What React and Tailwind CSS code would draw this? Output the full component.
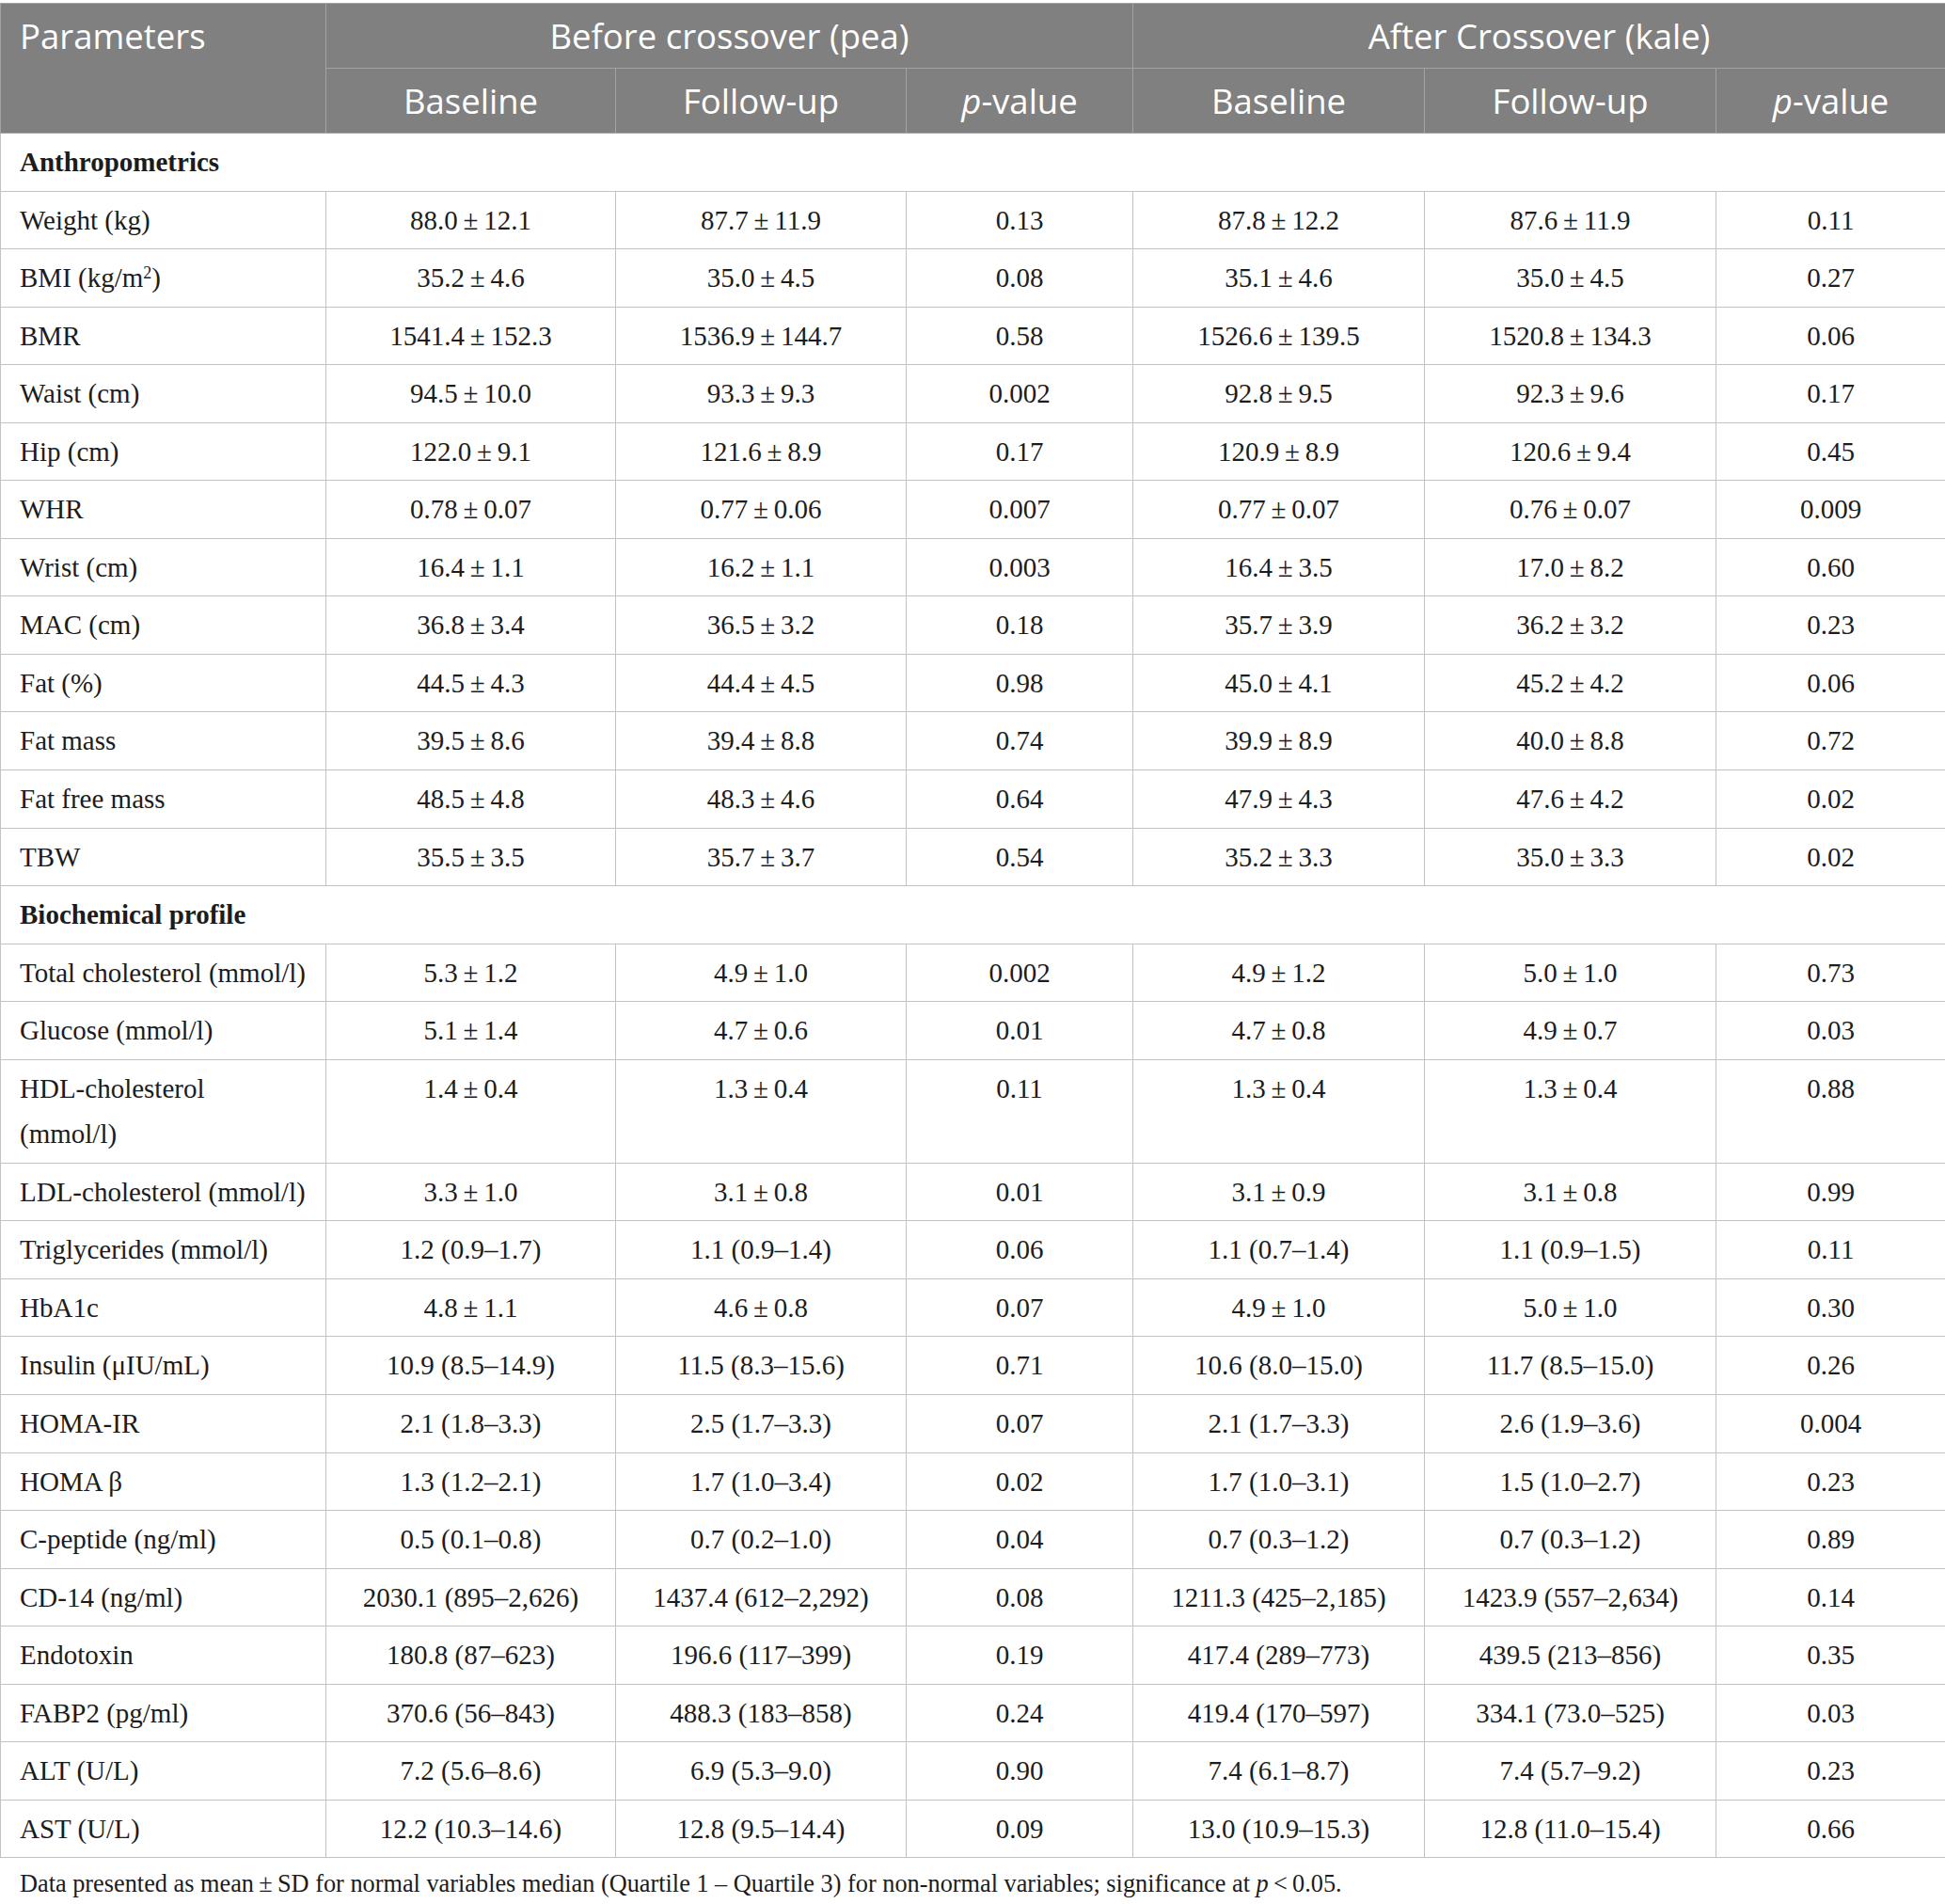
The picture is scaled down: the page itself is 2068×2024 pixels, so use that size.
// Crossover study results table: pea vs kale, anthropometrics and biochemical profile.

const anthropometrics = [
  ['Weight (kg)', '88.0 ± 12.1', '87.7 ± 11.9', '0.13', '87.8 ± 12.2', '87.6 ± 11.9', '0.11'],
  [<>BMI (kg/m<sup className="text-[18px]">2</sup>)</>, '35.2 ± 4.6', '35.0 ± 4.5', '0.08', '35.1 ± 4.6', '35.0 ± 4.5', '0.27'],
  ['BMR', '1541.4 ± 152.3', '1536.9 ± 144.7', '0.58', '1526.6 ± 139.5', '1520.8 ± 134.3', '0.06'],
  ['Waist (cm)', '94.5 ± 10.0', '93.3 ± 9.3', '0.002', '92.8 ± 9.5', '92.3 ± 9.6', '0.17'],
  ['Hip (cm)', '122.0 ± 9.1', '121.6 ± 8.9', '0.17', '120.9 ± 8.9', '120.6 ± 9.4', '0.45'],
  ['WHR', '0.78 ± 0.07', '0.77 ± 0.06', '0.007', '0.77 ± 0.07', '0.76 ± 0.07', '0.009'],
  ['Wrist (cm)', '16.4 ± 1.1', '16.2 ± 1.1', '0.003', '16.4 ± 3.5', '17.0 ± 8.2', '0.60'],
  ['MAC (cm)', '36.8 ± 3.4', '36.5 ± 3.2', '0.18', '35.7 ± 3.9', '36.2 ± 3.2', '0.23'],
  ['Fat (%)', '44.5 ± 4.3', '44.4 ± 4.5', '0.98', '45.0 ± 4.1', '45.2 ± 4.2', '0.06'],
  ['Fat mass', '39.5 ± 8.6', '39.4 ± 8.8', '0.74', '39.9 ± 8.9', '40.0 ± 8.8', '0.72'],
  ['Fat free mass', '48.5 ± 4.8', '48.3 ± 4.6', '0.64', '47.9 ± 4.3', '47.6 ± 4.2', '0.02'],
  ['TBW', '35.5 ± 3.5', '35.7 ± 3.7', '0.54', '35.2 ± 3.3', '35.0 ± 3.3', '0.02'],
];

const biochemical = [
  ['Total cholesterol (mmol/l)', '5.3 ± 1.2', '4.9 ± 1.0', '0.002', '4.9 ± 1.2', '5.0 ± 1.0', '0.73'],
  ['Glucose (mmol/l)', '5.1 ± 1.4', '4.7 ± 0.6', '0.01', '4.7 ± 0.8', '4.9 ± 0.7', '0.03'],
  [<>HDL-cholesterol<br />(mmol/l)</>, '1.4 ± 0.4', '1.3 ± 0.4', '0.11', '1.3 ± 0.4', '1.3 ± 0.4', '0.88'],
  ['LDL-cholesterol (mmol/l)', '3.3 ± 1.0', '3.1 ± 0.8', '0.01', '3.1 ± 0.9', '3.1 ± 0.8', '0.99'],
  ['Triglycerides (mmol/l)', '1.2 (0.9–1.7)', '1.1 (0.9–1.4)', '0.06', '1.1 (0.7–1.4)', '1.1 (0.9–1.5)', '0.11'],
  ['HbA1c', '4.8 ± 1.1', '4.6 ± 0.8', '0.07', '4.9 ± 1.0', '5.0 ± 1.0', '0.30'],
  ['Insulin (μIU/mL)', '10.9 (8.5–14.9)', '11.5 (8.3–15.6)', '0.71', '10.6 (8.0–15.0)', '11.7 (8.5–15.0)', '0.26'],
  ['HOMA-IR', '2.1 (1.8–3.3)', '2.5 (1.7–3.3)', '0.07', '2.1 (1.7–3.3)', '2.6 (1.9–3.6)', '0.004'],
  ['HOMA β', '1.3 (1.2–2.1)', '1.7 (1.0–3.4)', '0.02', '1.7 (1.0–3.1)', '1.5 (1.0–2.7)', '0.23'],
  ['C-peptide (ng/ml)', '0.5 (0.1–0.8)', '0.7 (0.2–1.0)', '0.04', '0.7 (0.3–1.2)', '0.7 (0.3–1.2)', '0.89'],
  ['CD-14 (ng/ml)', '2030.1 (895–2,626)', '1437.4 (612–2,292)', '0.08', '1211.3 (425–2,185)', '1423.9 (557–2,634)', '0.14'],
  ['Endotoxin', '180.8 (87–623)', '196.6 (117–399)', '0.19', '417.4 (289–773)', '439.5 (213–856)', '0.35'],
  ['FABP2 (pg/ml)', '370.6 (56–843)', '488.3 (183–858)', '0.24', '419.4 (170–597)', '334.1 (73.0–525)', '0.03'],
  ['ALT (U/L)', '7.2 (5.6–8.6)', '6.9 (5.3–9.0)', '0.90', '7.4 (6.1–8.7)', '7.4 (5.7–9.2)', '0.23'],
  ['AST (U/L)', '12.2 (10.3–14.6)', '12.8 (9.5–14.4)', '0.09', '13.0 (10.9–15.3)', '12.8 (11.0–15.4)', '0.66'],
];

// mean ± SD values are set with thin spaces round the sign
const thin = (v) => v.replace(/ ± /g, '\u2009±\u2009');

const headCell = 'border border-[#a3a3a3] px-[20px] py-[10px] leading-[48px] font-normal align-top';
const bodyCell = 'border border-[#c2c2c2] py-[6px] leading-[48.55px] align-top whitespace-nowrap';

function PValue() {
  return (
    <>
      <i>p</i>-value
    </>
  );
}

function SectionRow({ title }) {
  return (
    <tr>
      <td colSpan={7} className={`${bodyCell} px-[20px] text-left font-bold`}>
        {title}
      </td>
    </tr>
  );
}

function DataRow({ row }) {
  return (
    <tr>
      <td className={`${bodyCell} pl-[20px] pr-[8px] text-left`}>{row[0]}</td>
      {row.slice(1).map((v, i) => (
        <td key={i} className={`${bodyCell} px-[8px] text-center`}>
          {thin(v)}
        </td>
      ))}
    </tr>
  );
}

export default function App() {
  return (
    <div className="w-[2068px] min-h-[2024px] bg-white pt-[3px] text-[#1c1c1c]">
      <table className="w-[2068px] table-fixed border-collapse font-['Liberation_Serif','Times_New_Roman',serif] text-[29px]">
        <colgroup>
          <col className="w-[346px]" />
          <col className="w-[308px]" />
          <col className="w-[309px]" />
          <col className="w-[241px]" />
          <col className="w-[310px]" />
          <col className="w-[310px]" />
          <col className="w-[244px]" />
        </colgroup>
        <thead className="bg-[#7f807f] text-white font-['Open_Sans','Noto_Sans',sans-serif] text-[36.5px]">
          <tr>
            <th rowSpan={2} className={`${headCell} text-left`}>Parameters</th>
            <th colSpan={3} className={`${headCell} text-center`}>Before crossover (pea)</th>
            <th colSpan={3} className={`${headCell} text-center`}>After Crossover (kale)</th>
          </tr>
          <tr>
            <th className={`${headCell} text-center`}>Baseline</th>
            <th className={`${headCell} text-center`}>Follow-up</th>
            <th className={`${headCell} text-center`}><PValue /></th>
            <th className={`${headCell} text-center`}>Baseline</th>
            <th className={`${headCell} text-center`}>Follow-up</th>
            <th className={`${headCell} text-center`}><PValue /></th>
          </tr>
        </thead>
        <tbody>
          <SectionRow title="Anthropometrics" />
          {anthropometrics.map((row, i) => (
            <DataRow key={`a${i}`} row={row} />
          ))}
          <SectionRow title="Biochemical profile" />
          {biochemical.map((row, i) => (
            <DataRow key={`b${i}`} row={row} />
          ))}
        </tbody>
      </table>
      <p className="mt-[12px] pl-[21px] font-['Liberation_Serif','Times_New_Roman',serif] text-[26.3px] leading-[32px]">
        Data presented as mean{'\u2009±\u2009'}SD for normal variables median (Quartile 1 – Quartile 3) for non-normal
        variables; significance at <i>p</i>{'\u2009<\u2009'}0.05.
      </p>
    </div>
  );
}
